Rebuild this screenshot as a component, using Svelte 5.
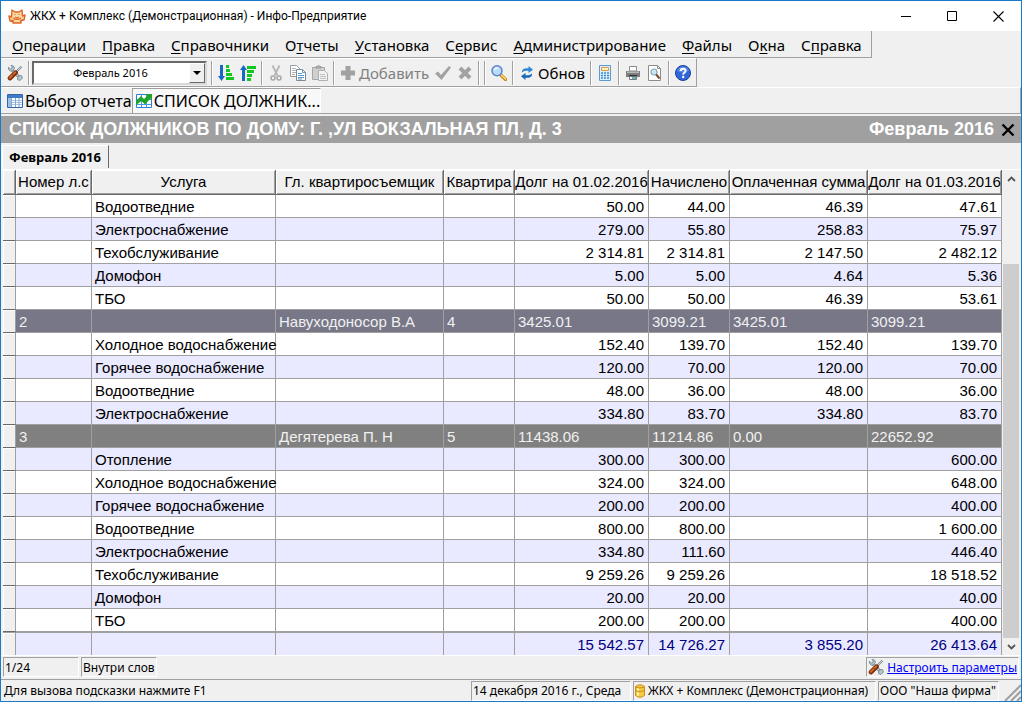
<script>
  const menu = [
    ["", "О", "перации"],
    ["", "П", "равка"],
    ["", "С", "правочники"],
    ["О", "т", "четы"],
    ["", "У", "становка"],
    ["С", "е", "рвис"],
    ["", "А", "дминистрирование"],
    ["", "Ф", "айлы"],
    ["О", "к", "на"],
    ["С", "п", "равка"],
  ];

  const columns = [
    "Номер л.с",
    "Услуга",
    "Гл. квартиросъемщик",
    "Квартира",
    "Долг на 01.02.2016",
    "Начислено",
    "Оплаченная сумма",
    "Долг на 01.03.2016",
  ];

  // a row with `person` is the header of an account, the others are its services
  const rows = [
    { service: "Водоотведние", sums: ["50.00", "44.00", "46.39", "47.61"] },
    { service: "Электроснабжение", sums: ["279.00", "55.80", "258.83", "75.97"] },
    { service: "Техобслуживание", sums: ["2 314.81", "2 314.81", "2 147.50", "2 482.12"] },
    { service: "Домофон", sums: ["5.00", "5.00", "4.64", "5.36"] },
    { service: "ТБО", sums: ["50.00", "50.00", "46.39", "53.61"] },
    { id: "2", person: "Навуходоносор В.А", flat: "4", current: true, sums: ["3425.01", "3099.21", "3425.01", "3099.21"] },
    { service: "Холодное водоснабжение", sums: ["152.40", "139.70", "152.40", "139.70"] },
    { service: "Горячее водоснабжение", sums: ["120.00", "70.00", "120.00", "70.00"] },
    { service: "Водоотведние", sums: ["48.00", "36.00", "48.00", "36.00"] },
    { service: "Электроснабжение", sums: ["334.80", "83.70", "334.80", "83.70"] },
    { id: "3", person: "Дегятерева П. Н", flat: "5", sums: ["11438.06", "11214.86", "0.00", "22652.92"] },
    { service: "Отопление", sums: ["300.00", "300.00", "", "600.00"] },
    { service: "Холодное водоснабжение", sums: ["324.00", "324.00", "", "648.00"] },
    { service: "Горячее водоснабжение", sums: ["200.00", "200.00", "", "400.00"] },
    { service: "Водоотведние", sums: ["800.00", "800.00", "", "1 600.00"] },
    { service: "Электроснабжение", sums: ["334.80", "111.60", "", "446.40"] },
    { service: "Техобслуживание", sums: ["9 259.26", "9 259.26", "", "18 518.52"] },
    { service: "Домофон", sums: ["20.00", "20.00", "", "40.00"] },
    { service: "ТБО", sums: ["200.00", "200.00", "", "400.00"] },
  ];

  const totals = ["15 542.57", "14 726.27", "3 855.20", "26 413.64"];

  let period = "Февраль 2016";
</script>

{#snippet tools()}
  <svg width="16" height="16" viewBox="0 0 16 16" aria-hidden="true">
    <path d="M5 5l8 8" stroke="#6d8088" stroke-width="3" stroke-linecap="round" />
    <path d="M5 5l8 8" stroke="#c9d6da" stroke-width="1.4" />
    <path d="M1.5 2.2l2 2 1.3-.8.5-1.6L3.800.6c2-.4 3.800.8 3.600 3L5.400 6.200C3 6.600 1 5 1.500 2.200z" fill="#b8c8cd" stroke="#5f747c" stroke-width=".7" />
    <path d="M11 11l3.500-.500 1 2.500-2.500 2.500-2.500-1z" fill="#b8c8cd" stroke="#5f747c" stroke-width=".7" />
    <path d="M14.500 1.500L9 7" stroke="#788a92" stroke-width="2" />
    <path d="M15 1l-5 5" stroke="#dbe5e8" stroke-width=".8" />
    <path d="M8.600 7.600l-5.600 5.600" stroke="#7e2e0a" stroke-width="4.600" stroke-linecap="round" />
    <path d="M8.200 7.400l-5.400 5.400" stroke="#d36a2a" stroke-width="2" stroke-linecap="round" />
    <path d="M7 10.500L5.500 9" stroke="#7e2e0a" />
  </svg>
{/snippet}

<div class="window">
  <header class="titlebar">
    <svg width="18" height="16" viewBox="0 0 18 16" aria-hidden="true">
      <path d="M4 2l3 2h4l3-2 .5 6 2.500-1-1 5-3 .5V15H5v-1.500L2 13 1 8l2.500 1z" fill="#fbd9a0" stroke="#df6426" stroke-width="1.400" stroke-linejoin="round" />
      <path d="M5 10c2 2 6 2 8 0M6.500 6.500h1M10.500 6.500h1M7 9l2 1 2-1M3 12l3 1M15 12l-3 1" fill="none" stroke="#df6426" stroke-width="1.200" />
    </svg>
    <h1>ЖКХ + Комплекс (Демонстрационная) - Инфо-Предприятие</h1>
    <div class="window-buttons">
      <button aria-label="Свернуть">
        <svg width="11" height="11"><path d="M0 5.500h10" stroke="#000" /></svg>
      </button>
      <button aria-label="Развернуть">
        <svg width="11" height="11"><path d="M.5.5h9v9h-9z" fill="none" stroke="#000" /></svg>
      </button>
      <button aria-label="Закрыть">
        <svg width="11" height="11"><path d="M.5.5l10 10M10.500.5l-10 10" stroke="#000" stroke-width="1.100" /></svg>
      </button>
    </div>
  </header>

  <nav class="menu">
    {#each menu as [before, key, after]}
      <button>{before}<u>{key}</u>{after}</button>
    {/each}
  </nav>

  <div class="toolbar">
    <div class="group">
      <button aria-label="Настройка">{@render tools()}</button>
    </div>
    <div class="group combo-group">
      <div class="combo">
        <select bind:value={period} aria-label="Период">
          <option>Февраль 2016</option>
        </select>
        <span class="combo-arrow"></span>
      </div>
    </div>
    <div class="group">
      <button aria-label="По возрастанию">
        <svg width="16" height="16" viewBox="0 0 16 16">
          <path d="M2 0h3v11h2l-3.500 5L0 11h2z" fill="#1769c4" />
          <path d="M8 0h3v3H8zM8 4h4v3H8zM8 8h6v3H8zM8 12h8v3H8z" fill="#10c820" />
        </svg>
      </button>
      <button aria-label="По убыванию">
        <svg width="16" height="16" viewBox="0 0 16 16">
          <path d="M2 16h3V5h2L3.500 0 0 5h2z" fill="#1769c4" />
          <path d="M7 1h9v3H7zM7 5h7v3H7zM7 9h5v3H7zM7 13h4v3H7z" fill="#10c820" />
        </svg>
      </button>
    </div>
    <div class="group">
      <button aria-label="Вырезать" disabled>
        <svg width="16" height="16" viewBox="0 0 16 16" fill="none">
          <path d="M4.500.5l5 10M11.500.5l-5 10" stroke="#b5b5b5" stroke-width="1.800" />
          <circle cx="5" cy="13" r="2" stroke="#a6a6a6" stroke-width="1.500" />
          <circle cx="11" cy="13" r="2" stroke="#a6a6a6" stroke-width="1.500" />
        </svg>
      </button>
      <button aria-label="Копировать">
        <svg width="16" height="16" viewBox="0 0 16 16">
          <path d="M.5.5h6l3 3v8h-9z" fill="#fff" stroke="#9a9a9a" />
          <path d="M2 3.500h4M2 5.500h5M2 7.500h4M2 9.500h3" stroke="#a8b4bd" />
          <path d="M6.500 4.500h6l3 3v8h-9z" fill="#fff" stroke="#7d8b96" />
          <path d="M12.500 4.500v3h3M8 8.500h4M8 10.500h6M8 12.500h6M8 14h4" fill="none" stroke="#5a9acb" />
        </svg>
      </button>
      <button aria-label="Вставить" disabled>
        <svg width="16" height="16" viewBox="0 0 16 16">
          <path d="M.5 2.500h12v12H.5z" fill="#cfcfcf" stroke="#a6a6a6" />
          <path d="M4 3V1.500h1.500a1 1 0 012 0H9V3z" fill="#b4b4b4" stroke="#999" />
          <path d="M6.500 5.500h6l3 3v7h-9z" fill="#f3f3f3" stroke="#b0b0b0" />
          <path d="M8 9.500h5M8 11.500h6M8 13.500h6" stroke="#c0c0c0" />
        </svg>
      </button>
    </div>
    <div class="group">
      <button class="labelled" disabled>
        <svg width="16" height="16" viewBox="0 0 16 16">
          <path d="M5.500 1h5v4.500H15v5h-4.500V15h-5v-4.500H1v-5h4.500z" fill="#a2a2a2" />
        </svg>Добавить
      </button>
      <button aria-label="Сохранить" disabled>
        <svg width="16" height="16" viewBox="0 0 16 16">
          <path d="M0 8.500L3 6.500l3 3.500L14 1l2 1.500L6.500 15z" fill="#a2a2a2" />
        </svg>
      </button>
      <button aria-label="Отменить" disabled>
        <svg width="16" height="16" viewBox="0 0 16 16">
          <path d="M3 3l10 10M13 3L3 13" stroke="#a2a2a2" stroke-width="4" />
        </svg>
      </button>
    </div>
    <div class="group empty"></div>
    <div class="group">
      <button aria-label="Найти">
        <svg width="16" height="16" viewBox="0 0 16 16">
          <path d="M9.500 9.500l5 5" stroke="#c98a1c" stroke-width="3.400" stroke-linecap="round" />
          <path d="M10.500 10l4 4" stroke="#ffd970" stroke-width="1.600" stroke-linecap="round" />
          <circle cx="6" cy="5.800" r="5" fill="#b7dcfb" stroke="#5f83d0" stroke-width="1.500" />
          <path d="M3 5.500a3 3 0 015-2.500z" fill="#f2faff" />
        </svg>
      </button>
    </div>
    <div class="group">
      <button class="labelled">
        <svg width="16" height="16" viewBox="0 0 16 16">
          <path d="M3 7.500V6q1-3 5-2.800h1.500V1L14 4.700 9.500 8V5.800H7.500Q4.800 5.600 3 7.500z" fill="#2f86d6" />
          <path d="M13 8.500V10q-1 3-5 2.800H6.500V15L2 11.300 6.500 8v2.200h2Q11.200 10.400 13 8.500z" fill="#1b68bb" />
        </svg>Обнов
      </button>
    </div>
    <div class="group">
      <button aria-label="Калькулятор">
        <svg width="16" height="16" viewBox="0 0 16 16">
          <path d="M2.500.5h11v15h-11z" fill="#dceefc" stroke="#5b9bd0" />
          <path d="M4.500 2.500h7v3h-7z" fill="#fff3c4" stroke="#e39a3b" />
          <path d="M4 8h8M4 10.500h8M4 13h8" stroke="#3b8ccc" stroke-width="1.600" stroke-dasharray="2 1" />
        </svg>
      </button>
    </div>
    <div class="group">
      <button aria-label="Печать">
        <svg width="16" height="16" viewBox="0 0 16 16">
          <path d="M4.500 1.500h7V6h-7z" fill="#fff" stroke="#8a8a8a" />
          <path d="M1 6h14v6H1z" fill="#7d7d7d" />
          <path d="M2 6.500h12v1.500H2z" fill="#b9b9b9" />
          <path d="M4 10h8v1.500H4z" fill="#333" />
          <path d="M4.500 11.500h7v3h-7z" fill="#fff" stroke="#777" />
          <path d="M7 13h4" stroke="#37a0a8" stroke-width="1.600" />
        </svg>
      </button>
      <button aria-label="Просмотр">
        <svg width="16" height="16" viewBox="0 0 16 16">
          <path d="M1.500.5h9l3 3v12h-12z" fill="#fff" stroke="#8d8d8d" />
          <path d="M10.500.5v3h3" fill="none" stroke="#8d8d8d" />
          <circle cx="7" cy="7" r="3" fill="#cfe6f6" stroke="#8aa4b8" stroke-width="1.200" />
          <path d="M9.200 9.500l3.300 4" stroke="#7a4a2c" stroke-width="2" />
        </svg>
      </button>
    </div>
    <div class="group">
      <button aria-label="Справка">
        <svg width="16" height="16" viewBox="0 0 16 16">
          <circle cx="8" cy="8" r="7.500" fill="#2f66d8" stroke="#1c3f9e" />
          <path d="M2 6a6.300 6.300 0 0112 0q-6 3-12 0z" fill="#5585e8" />
          <path d="M5.600 6.200Q5.800 3.800 8.200 3.800t2.300 2q0 1.300-1.500 2.200-.8.6-.8 1.800" fill="none" stroke="#fff" stroke-width="1.900" />
          <circle cx="8.200" cy="12" r="1.200" fill="#fff" />
        </svg>
      </button>
    </div>
  </div>

  <div class="open-windows">
    <button>
      <svg width="16" height="16" viewBox="0 0 16 16">
        <path d="M.5 1.500h15v13H.5z" fill="#fff" stroke="#3566a8" />
        <path d="M1 2h14v3H1z" fill="#3f7cc4" />
        <path d="M1 7.500h14M1 9.500h14M1 11.500h14" stroke="#a9c6e6" />
        <path d="M1 5h3v9H1z" fill="#9dbfe4" />
        <path d="M4.500 5v9M8.500 5v9M12 5v9" stroke="#7fa8d4" />
      </svg>Выбор отчета
    </button>
    <button class="active">
      <svg width="16" height="16" viewBox="0 0 16 16">
        <path d="M.5 1.500h15v13H.5z" fill="#fff" stroke="#2a7fd4" />
        <path d="M1 11.500h14M5.500 2v12M10.500 2v12M1 6.500h14" stroke="#4a98e0" />
        <path d="M0 8l5-5 3 3 3-3-1.500-2H16v6l-1.500-1.500L9 11.500 5.500 8 0 12z" fill="#1fa32a" />
      </svg>СПИСОК ДОЛЖНИК...
    </button>
  </div>

  <div class="caption">
    <h2>СПИСОК ДОЛЖНИКОВ ПО ДОМУ: Г. ,УЛ ВОКЗАЛЬНАЯ ПЛ, Д. 3</h2>
    <span>Февраль 2016</span>
    <button aria-label="Закрыть отчет">
      <svg width="14" height="14"><path d="M1.500 1.500l11 11M12.500 1.500l-11 11" stroke="#000" stroke-width="2.400" /></svg>
    </button>
  </div>

  <div class="sheet-tabs"><button>Февраль 2016</button></div>

  <main class="grid">
    <table>
      <colgroup>
        <col class="c-mark" />
        <col class="c-id" />
        <col />
        <col class="c-person" />
        <col class="c-flat" />
        <col class="c-debt" />
        <col class="c-charged" />
        <col class="c-paid" />
        <col class="c-debt" />
      </colgroup>
      <thead>
        <tr>
          <th class="mark" aria-label="Строка"></th>
          {#each columns as title}
            <th>{title}</th>
          {/each}
        </tr>
      </thead>
      <tbody>
        {#each rows as row}
          <tr class:account={row.person} class:current={row.current}>
            <td class="mark"></td>
            <td>{row.id ?? ""}</td>
            <td>{row.service ?? ""}</td>
            <td>{row.person ?? ""}</td>
            <td>{row.flat ?? ""}</td>
            {#each row.sums as sum}
              <td class="sum">{sum}</td>
            {/each}
          </tr>
        {/each}
      </tbody>
      <tfoot>
        <tr>
          <td class="mark"></td>
          <td></td>
          <td></td>
          <td></td>
          <td></td>
          {#each totals as total}
            <td class="sum">{total}</td>
          {/each}
        </tr>
      </tfoot>
    </table>
    <div class="scrollbar">
      <button aria-label="Вверх">
        <svg width="9" height="6"><path d="M1 5l3.500-3.500L8 5" fill="none" stroke="#555" stroke-width="1.800" /></svg>
      </button>
      <div class="track"><div class="thumb"></div></div>
      <button aria-label="Вниз">
        <svg width="9" height="6"><path d="M1 1l3.500 3.500L8 1" fill="none" stroke="#555" stroke-width="1.800" /></svg>
      </button>
    </div>
  </main>

  <div class="grid-status">
    <span class="cell position">1/24</span>
    <span class="cell">Внутри слов</span>
    <span class="cell params">{@render tools()}<a href="#params">Настроить параметры</a></span>
  </div>

  <footer class="status">
    <span class="hint">Для вызова подсказки нажмите F1</span>
    <span class="cell date">14 декабря 2016 г., Среда</span>
    <span class="cell base">
      <svg width="10" height="14" viewBox="0 0 10 14" aria-hidden="true">
        <path d="M.5 2.500Q5-1 9.500 2.500v9Q5 15 .5 11.500z" fill="#f6c945" stroke="#c98e10" />
        <path d="M.5 6.500Q5 9 9.500 6.500M.5 3Q5 5 9.500 3" fill="none" stroke="#c98e10" />
        <path d="M3 4.500v2M3 8.500v3" stroke="#fff3b8" stroke-width="2" />
      </svg>ЖКХ + Комплекс (Демонстрационная)
    </span>
    <span class="cell firm">ООО "Наша фирма"</span>
    <svg class="grip" width="18" height="18" viewBox="0 0 18 18" aria-hidden="true">
      <path d="M2 18L18 2M8 18L18 8M14 18l4-4" stroke="#a0a0a0" stroke-width="2" />
    </svg>
  </footer>
</div>

<style>
  :global(body) {
    background: #f0f0f0;
  }
  .window {
    box-sizing: border-box;
    min-height: 100vh;
    display: flex;
    flex-direction: column;
    border: 1px solid #1979ca;
    background: #f0f0f0;
    color: #000;
    font-family: "Noto Sans", "Open Sans", sans-serif;
    font-size: 12px;
    white-space: nowrap;
  }
  button {
    display: flex;
    align-items: center;
    border: 0;
    padding: 0;
    background: none;
    color: inherit;
    font: inherit;
    white-space: nowrap;
  }
  svg {
    display: block;
    flex: none;
  }
  h1,
  h2 {
    margin: 0;
    font: inherit;
  }

  .titlebar {
    display: flex;
    align-items: center;
    height: 30px;
    padding-left: 7px;
    gap: 4px;
    background: #fff;
    font-family: Roboto, "Open Sans", sans-serif;
  }
  .window-buttons {
    display: flex;
    margin-left: auto;
  }
  .window-buttons button {
    width: 46px;
    height: 30px;
    justify-content: center;
  }

  .menu {
    align-self: flex-start;
    box-sizing: border-box;
    height: 27px;
    display: flex;
    align-items: center;
    gap: 16px;
    padding: 1px 9px 0 11px;
    border-right: 1px solid #a0a0a0;
    border-bottom: 1px solid #a0a0a0;
    font-size: 15px;
  }
  u {
    text-underline-offset: 2px;
  }

  .toolbar {
    align-self: flex-start;
    box-sizing: border-box;
    height: 29px;
    display: flex;
    align-items: center;
    border-top: 1px solid #fff;
    border-right: 1px solid #a0a0a0;
    border-bottom: 1px solid #a0a0a0;
    font-size: 15px;
  }
  .group {
    display: flex;
    align-items: center;
    gap: 6px;
    height: 24px;
    padding: 0 5px 0 6px;
    border-left: 1px solid #a0a0a0;
    box-shadow: inset 1px 0 #fff;
  }
  .group:first-child {
    border-left: 0;
    box-shadow: none;
  }
  .group.combo-group {
    padding: 0 4px 0 3px;
  }
  .group.empty {
    padding: 0 3px 0 2px;
  }
  .labelled {
    gap: 3px;
  }
  button:disabled {
    color: #808080;
  }
  .combo {
    position: relative;
    width: 175px;
    height: 24px;
  }
  .combo select {
    box-sizing: border-box;
    width: 100%;
    height: 100%;
    appearance: none;
    border: 2px solid;
    border-color: #696969 #d8d8d8 #d8d8d8 #696969;
    border-radius: 0;
    padding: 0 18px 0 0;
    background: #fff;
    color: #000;
    font-family: inherit;
    font-size: 11px;
    text-align: center;
    text-align-last: center;
  }
  .combo-arrow {
    position: absolute;
    top: 2px;
    right: 2px;
    box-sizing: border-box;
    width: 16px;
    height: 20px;
    display: grid;
    place-items: center;
    border: 1px solid;
    border-color: #fff #696969 #696969 #fff;
    background: #f0f0f0;
    pointer-events: none;
  }
  .combo-arrow::after {
    content: "";
    border: 4px solid transparent;
    border-top-color: #000;
    border-bottom: 0;
  }

  .open-windows {
    box-sizing: border-box;
    height: 27px;
    display: flex;
    border-top: 1px solid #fff;
    border-right: 1px solid #a0a0a0;
    border-bottom: 1px solid #a0a0a0;
    font-size: 16px;
  }
  .open-windows button {
    gap: 2px;
    padding: 0 0 0 6px;
  }
  .open-windows .active {
    padding: 0 0 0 3px;
    border-top: 1px solid #a0a0a0;
    border-left: 1px solid #a0a0a0;
    border-right: 1px solid #fff;
    background: #f8f8f8;
  }

  .caption {
    display: flex;
    align-items: center;
    height: 27px;
    margin-top: 2px;
    padding: 0 6px 0 8px;
    background: #a0a0a0;
    color: #fff;
    font: bold 18px "Liberation Sans", sans-serif;
  }
  .caption span {
    margin: 0 7px 0 auto;
  }

  .sheet-tabs {
    display: flex;
    align-items: flex-end;
    height: 26px;
    padding-left: 1px;
  }
  .sheet-tabs button {
    height: 23px;
    margin-bottom: 1px;
    padding: 0 7px 0 6px;
    border-top: 1px solid #fff;
    border-left: 1px solid #fff;
    border-right: 1px solid #696969;
    font-size: 13px;
    font-weight: bold;
  }

  .grid {
    display: flex;
    padding-left: 2px;
    border-top: 1px solid #fff;
    border-bottom: 1px solid #fff;
    font: 15px "Liberation Sans", sans-serif;
  }
  table {
    flex: 1;
    width: 0;
    table-layout: fixed;
    border-collapse: separate;
    border-spacing: 0;
    background: #fff;
  }
  .c-mark {
    width: 13px;
  }
  .c-id {
    width: 76px;
  }
  .c-person {
    width: 168px;
  }
  .c-flat {
    width: 71px;
  }
  .c-debt {
    width: 134px;
  }
  .c-charged {
    width: 81px;
  }
  .c-paid {
    width: 138px;
  }
  th,
  td {
    box-sizing: border-box;
    height: 23px;
    padding: 2px 4px 0 3px;
    border-right: 1px solid #a0a0a0;
    border-bottom: 1px solid #a0a0a0;
    line-height: 20px;
  }
  th {
    height: 25px;
    padding: 0;
    border-right-color: #696969;
    border-bottom-color: #696969;
    background: #f0f0f0;
    box-shadow: inset 1px 1px #fff, inset -1px -1px #a0a0a0;
    font-weight: normal;
    text-align: center;
  }
  tbody tr:nth-child(even),
  tfoot tr {
    background: #e9e9ff;
  }
  .sum {
    text-align: right;
  }
  td.mark {
    padding: 0;
    border-bottom-color: #696969;
    background: #f0f0f0;
    box-shadow: inset 1px 1px #fff;
  }
  tbody tr.account {
    background: #808080;
    color: #f0f0f0;
  }
  tbody tr.current {
    background: #777788;
  }
  .account .sum {
    text-align: left;
  }
  tfoot td {
    border-top: 1px solid #a0a0a0;
    border-bottom: 0;
    color: #000080;
  }
  .scrollbar {
    width: 18px;
    margin-right: 1px;
    display: flex;
    flex-direction: column;
  }
  .scrollbar button {
    height: 17px;
    justify-content: center;
  }
  .track {
    flex: 1;
    display: flex;
    flex-direction: column;
    justify-content: flex-end;
  }
  .thumb {
    height: 83%;
    margin: 0 1px;
    background: #cdcdcd;
  }

  .grid-status,
  .status {
    display: flex;
    align-items: center;
    gap: 2px;
    padding: 1px 2px;
    font-size: 12px;
  }
  .cell {
    box-sizing: border-box;
    height: 20px;
    display: flex;
    align-items: center;
    padding: 0 1px;
    border: 1px solid;
    border-color: #a0a0a0 #fff #fff #a0a0a0;
  }
  .position {
    width: 76px;
  }
  .params {
    margin-left: auto;
    gap: 3px;
  }
  a {
    color: #0000ff;
  }
  .status {
    flex: 1;
    margin-top: 1px;
    padding: 0 0 0 3px;
    border-top: 1px solid #a0a0a0;
  }
  .hint {
    flex: 1;
  }
  .date {
    width: 160px;
  }
  .base {
    width: 243px;
    gap: 3px;
  }
  .firm {
    width: 121px;
    margin-right: 2px;
  }
  .grip {
    align-self: flex-end;
  }
</style>
